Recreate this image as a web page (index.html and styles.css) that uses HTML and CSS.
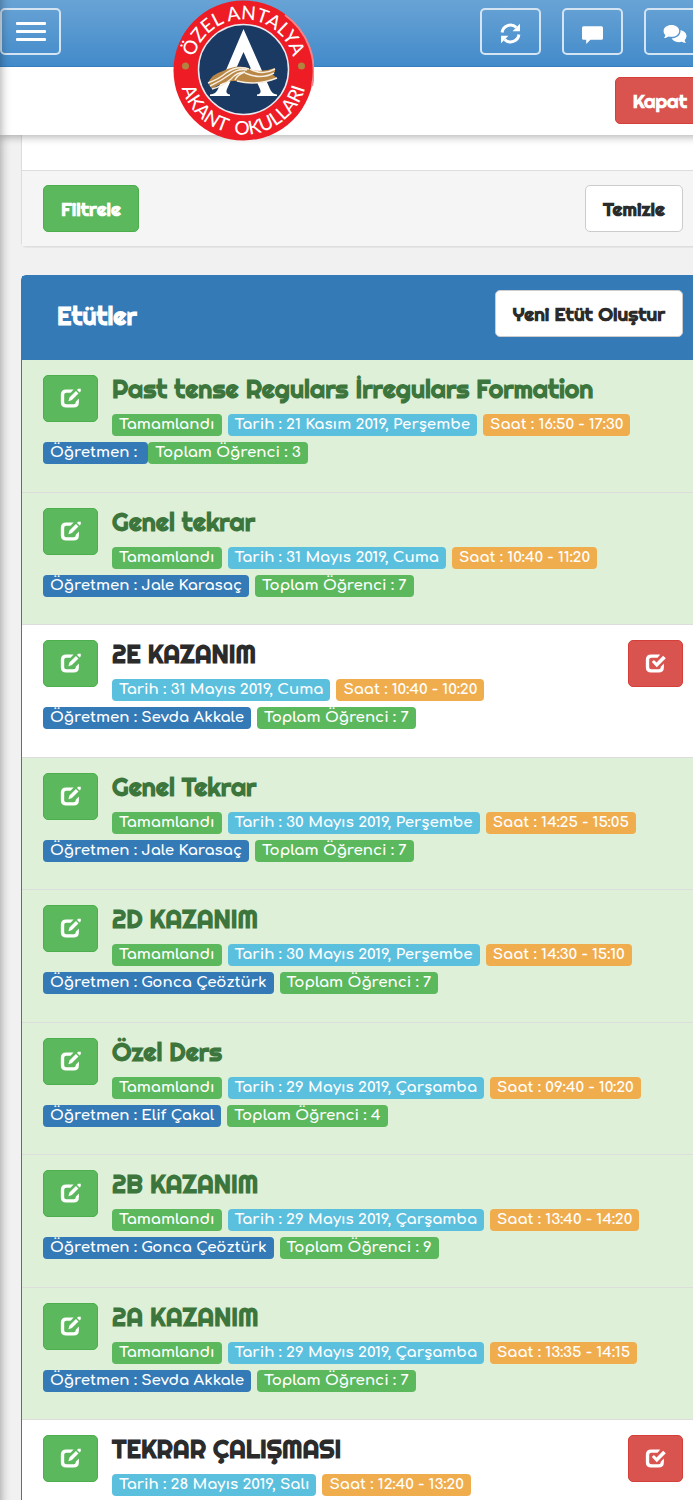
FILE: index.html
```html
<!DOCTYPE html>
<html lang="tr">
<head>
  <meta charset="UTF-8">
  <meta name="viewport" content="width=device-width, initial-scale=1.0">
  <title>Etütler</title>
  <link rel="stylesheet" href="styles.css">
</head>
<body>
  <!-- shared icons -->
  <svg width="0" height="0" class="sprite" aria-hidden="true">
    <symbol id="edit" viewBox="0 0 20 20">
      <path d="M13 1.500H6Q.8 1.500 .8 6.500V13.500Q.8 18.500 6 18.500H13Q18 18.500 18 13.500V10L15 13V13.500Q15 15.500 13 15.500H6Q4 15.500 4 13.500V6.500Q4 4.500 6 4.500H10Z" fill="currentColor"/>
      <path d="M8 12.500L9 9L15.200 2.800L17.600 5.200L11.400 11.400ZM16.200 1.900L17.200 .8H19.800V3.200L18.600 4.300Z" fill="currentColor"/>
    </symbol>
    <symbol id="check" viewBox="0 0 20 20">
      <path d="M14.500 1.500H6Q.8 1.500 .8 6.500V13.500Q.8 18.500 6 18.500H13Q18 18.500 18 13.500V10L15 13V13.500Q15 15.500 13 15.500H6Q4 15.500 4 13.500V6.500Q4 4.500 6 4.500H12Z" fill="currentColor"/>
      <path d="M6.500 8.500L8.500 6.700L11 9L17.300 2.500L19.800 5L11.200 13.500Z" fill="currentColor"/>
    </symbol>
  </svg>

  <div class="side-menu"></div>

  <div class="page">
    <header class="top">
      <div class="navbar">
        <button class="nav-btn" aria-label="Menü">
          <span class="bar"></span>
          <span class="bar"></span>
          <span class="bar"></span>
        </button>
        <div class="nav-right">
          <button class="nav-btn" aria-label="Yenile">
            <svg class="icon" viewBox="0 0 20 20">
              <path d="M2 9A8 8 0 0 1 15.500 4.200M18 11A8 8 0 0 1 4.500 15.800" fill="none" stroke="currentColor" stroke-width="2.800"/>
              <path d="M19 .8V7.800H12ZM1 19.200V12.200H8Z" fill="currentColor"/>
            </svg>
          </button>
          <button class="nav-btn" aria-label="Mesaj">
            <svg class="icon" viewBox="0 0 20 20">
              <path d="M1.500 3H18.500Q20 3 20 4.500V14.500Q20 16 18.500 16H8L4 20V16H1.500Q0 16 0 14.500V4.500Q0 3 1.500 3Z" fill="currentColor"/>
            </svg>
          </button>
          <button class="nav-btn" aria-label="Sohbet">
            <svg class="icon icon-wide" viewBox="0 0 24 20">
              <path d="M17.500 6.500C21 7.500 23.500 9.500 23.500 12.500C23.500 14 22.800 15.500 21.600 16.500C21.800 17.600 22.300 18.500 23 19.300C21.300 19.200 20 18.900 18.900 18.200C14 19.400 10 18 8.600 14.800C13.500 14.800 18 12 17.500 6.500Z" fill="currentColor"/>
              <path d="M8.500 1.500C12.800 1.500 16.200 4 16.200 7.400S12.800 13.300 8.500 13.300C7.500 13.300 6.500 13.200 5.600 12.900C4.400 13.800 2.800 14.400 1 14.500C1.800 13.500 2.300 12.500 2.400 11.400C1.200 10.400 .6 9 .6 7.400C.6 4 4.200 1.500 8.500 1.500Z" fill="currentColor"/>
            </svg>
          </button>
        </div>
      </div>
      <div class="subbar">
        <button class="btn btn-danger">Kapat</button>
      </div>

      <svg class="logo" viewBox="0 0 141 141" role="img" aria-label="Özel Antalya Akant Okulları">
        <defs>
          <path id="arcTop" d="M22.600 88A51 51 0 1 1 118.400 88"/>
          <path id="arcBottom" d="M10.400 48.600A64 64 0 1 0 130.600 48.600"/>
        </defs>
        <circle cx="70.500" cy="70.500" r="70" fill="#ee1c25"/>
        <path d="M112 15A69 69 0 0 1 139 86" fill="none" stroke="#f5858a" stroke-width="2"/>
        <circle cx="70.500" cy="69.500" r="45" fill="#1b3a63" stroke="#e9e9ee" stroke-width="1.500"/>
        <circle cx="12.500" cy="66" r="3.500" fill="#b18440"/>
        <circle cx="128.500" cy="66" r="3.500" fill="#b18440"/>
        <text class="logo-text"><textPath href="#arcTop" startOffset="50%" text-anchor="middle">ÖZEL ANTALYA</textPath></text>
        <text class="logo-text"><textPath href="#arcBottom" startOffset="50%" text-anchor="middle">AKANT&nbsp; OKULLARI</textPath></text>
        <!-- emblem -->
        <path d="M70.500 29L97 89Q99 94 104 94.500V96H84V94.500Q89 94 87 89L70.500 52L54 89Q52 94 57 94.500V96H37V94.500Q43 94 45 89Z" fill="#fff"/>
        <path d="M35 83Q39 74 50 71Q66 63 77 69Q88 73 102 68V72L99 74L104 78Q88 86 62 81Q52 80 39 89Z" fill="#b98746"/>
        <path d="M35 83Q46 79 53 73Q64 65 76 69M37 86Q48 81 56 75Q65 68 74 70M39 89Q50 86 58 79Q64 72 72 72M77 69Q90 76 102 69M72 73Q88 80 101 73M62 80Q64 75 72 72M64 81Q84 86 104 78" fill="none" stroke="#f6efe2" stroke-width="1.500"/>
      </svg>
    </header>

    <main>
      <section class="panel filter">
        <div class="filter-body"></div>
        <div class="filter-footer">
          <button class="btn btn-success">Filtrele</button>
          <button class="btn btn-default">Temizle</button>
        </div>
      </section>

      <section class="panel panel-primary">
        <div class="panel-heading">
          <h1>Etütler</h1>
          <button class="btn btn-default">Yeni Etüt Oluştur</button>
        </div>
        <ul class="list">
          <li class="item done">
            <div class="item-head">
              <button class="btn btn-success btn-icon" aria-label="Düzenle"><svg class="icon"><use href="#edit"/></svg></button>
              <div class="item-info">
                <h2>Past tense Regulars İrregulars Formation</h2>
                <div class="labels">
                  <span class="label green">Tamamlandı</span>
                  <span class="label cyan">Tarih : 21 Kasım 2019, Perşembe</span>
                  <span class="label orange">Saat : 16:50 - 17:30</span>
                </div>
              </div>
            </div>
            <div class="labels joined">
              <span class="label blue">Öğretmen :&nbsp;</span>
              <span class="label green">Toplam Öğrenci : 3</span>
            </div>
          </li>
          <li class="item done">
            <div class="item-head">
              <button class="btn btn-success btn-icon" aria-label="Düzenle"><svg class="icon"><use href="#edit"/></svg></button>
              <div class="item-info">
                <h2>Genel tekrar</h2>
                <div class="labels">
                  <span class="label green">Tamamlandı</span>
                  <span class="label cyan">Tarih : 31 Mayıs 2019, Cuma</span>
                  <span class="label orange">Saat : 10:40 - 11:20</span>
                </div>
              </div>
            </div>
            <div class="labels">
              <span class="label blue">Öğretmen : Jale Karasaç</span>
              <span class="label green">Toplam Öğrenci : 7</span>
            </div>
          </li>
          <li class="item">
            <div class="item-head">
              <button class="btn btn-success btn-icon" aria-label="Düzenle"><svg class="icon"><use href="#edit"/></svg></button>
              <div class="item-info">
                <h2>2E KAZANIM</h2>
                <div class="labels">
                  <span class="label cyan">Tarih : 31 Mayıs 2019, Cuma</span>
                  <span class="label orange">Saat : 10:40 - 10:20</span>
                </div>
              </div>
              <button class="btn btn-danger btn-icon" aria-label="Tamamla"><svg class="icon"><use href="#check"/></svg></button>
            </div>
            <div class="labels">
              <span class="label blue">Öğretmen : Sevda Akkale</span>
              <span class="label green">Toplam Öğrenci : 7</span>
            </div>
          </li>
          <li class="item done">
            <div class="item-head">
              <button class="btn btn-success btn-icon" aria-label="Düzenle"><svg class="icon"><use href="#edit"/></svg></button>
              <div class="item-info">
                <h2>Genel Tekrar</h2>
                <div class="labels">
                  <span class="label green">Tamamlandı</span>
                  <span class="label cyan">Tarih : 30 Mayıs 2019, Perşembe</span>
                  <span class="label orange">Saat : 14:25 - 15:05</span>
                </div>
              </div>
            </div>
            <div class="labels">
              <span class="label blue">Öğretmen : Jale Karasaç</span>
              <span class="label green">Toplam Öğrenci : 7</span>
            </div>
          </li>
          <li class="item done">
            <div class="item-head">
              <button class="btn btn-success btn-icon" aria-label="Düzenle"><svg class="icon"><use href="#edit"/></svg></button>
              <div class="item-info">
                <h2>2D KAZANIM</h2>
                <div class="labels">
                  <span class="label green">Tamamlandı</span>
                  <span class="label cyan">Tarih : 30 Mayıs 2019, Perşembe</span>
                  <span class="label orange">Saat : 14:30 - 15:10</span>
                </div>
              </div>
            </div>
            <div class="labels">
              <span class="label blue">Öğretmen : Gonca Çeöztürk</span>
              <span class="label green">Toplam Öğrenci : 7</span>
            </div>
          </li>
          <li class="item done">
            <div class="item-head">
              <button class="btn btn-success btn-icon" aria-label="Düzenle"><svg class="icon"><use href="#edit"/></svg></button>
              <div class="item-info">
                <h2>Özel Ders</h2>
                <div class="labels">
                  <span class="label green">Tamamlandı</span>
                  <span class="label cyan">Tarih : 29 Mayıs 2019, Çarşamba</span>
                  <span class="label orange">Saat : 09:40 - 10:20</span>
                </div>
              </div>
            </div>
            <div class="labels">
              <span class="label blue">Öğretmen : Elif Çakal</span>
              <span class="label green">Toplam Öğrenci : 4</span>
            </div>
          </li>
          <li class="item done">
            <div class="item-head">
              <button class="btn btn-success btn-icon" aria-label="Düzenle"><svg class="icon"><use href="#edit"/></svg></button>
              <div class="item-info">
                <h2>2B KAZANIM</h2>
                <div class="labels">
                  <span class="label green">Tamamlandı</span>
                  <span class="label cyan">Tarih : 29 Mayıs 2019, Çarşamba</span>
                  <span class="label orange">Saat : 13:40 - 14:20</span>
                </div>
              </div>
            </div>
            <div class="labels">
              <span class="label blue">Öğretmen : Gonca Çeöztürk</span>
              <span class="label green">Toplam Öğrenci : 9</span>
            </div>
          </li>
          <li class="item done">
            <div class="item-head">
              <button class="btn btn-success btn-icon" aria-label="Düzenle"><svg class="icon"><use href="#edit"/></svg></button>
              <div class="item-info">
                <h2>2A KAZANIM</h2>
                <div class="labels">
                  <span class="label green">Tamamlandı</span>
                  <span class="label cyan">Tarih : 29 Mayıs 2019, Çarşamba</span>
                  <span class="label orange">Saat : 13:35 - 14:15</span>
                </div>
              </div>
            </div>
            <div class="labels">
              <span class="label blue">Öğretmen : Sevda Akkale</span>
              <span class="label green">Toplam Öğrenci : 7</span>
            </div>
          </li>
          <li class="item">
            <div class="item-head">
              <button class="btn btn-success btn-icon" aria-label="Düzenle"><svg class="icon"><use href="#edit"/></svg></button>
              <div class="item-info">
                <h2>TEKRAR ÇALIŞMASI</h2>
                <div class="labels">
                  <span class="label cyan">Tarih : 28 Mayıs 2019, Salı</span>
                  <span class="label orange">Saat : 12:40 - 13:20</span>
                </div>
              </div>
              <button class="btn btn-danger btn-icon" aria-label="Tamamla"><svg class="icon"><use href="#check"/></svg></button>
            </div>
          </li>
        </ul>
      </section>
    </main>
  </div>
</body>
</html>
```
FILE: styles.css
```css
* {
  box-sizing: border-box;
}
body {
  margin: 0;
  background: #f1f1f1;
  color: #2b2b2b;
  font-family: Righteous, Lato, sans-serif;
  overflow-x: hidden;
}
button {
  font-family: inherit;
  cursor: pointer;
}
.sprite {
  position: absolute;
}
/* closed menu, only its shadow reaches the page */
.side-menu {
  position: fixed;
  z-index: 5;
  top: -20px;
  bottom: -20px;
  left: -240px;
  width: 240px;
  box-shadow: 0 0 10px rgba(0, 0, 0, 0.4);
}
/* the layout is a little wider than the screen */
.page {
  width: calc(100% + 12px);
}

/* header */
.top {
  position: relative;
  box-shadow: 0 2px 8px rgba(0, 0, 0, 0.3);
}
.navbar {
  display: flex;
  justify-content: space-between;
  height: 67px;
  padding-top: 8px;
  background: linear-gradient(#69a3d5, #428bca);
  border-bottom: 1px solid #3580c0;
}
.nav-right {
  display: flex;
  gap: 21px;
}
.nav-btn {
  display: flex;
  flex-direction: column;
  align-items: center;
  justify-content: center;
  gap: 5px;
  width: 61px;
  height: 47px;
  padding: 0;
  border: 2px solid #d5e4f2;
  border-radius: 5px;
  background: none;
  color: #fff;
}
.nav-right .nav-btn {
  padding-top: 4px;
}
.bar {
  width: 30px;
  height: 3px;
  border-radius: 1px;
  background: #fff;
}
.subbar {
  display: flex;
  justify-content: flex-end;
  align-items: flex-start;
  height: 68px;
  padding-top: 10px;
  background: #fff;
}
.logo {
  position: absolute;
  top: 0;
  left: 173px;
  width: 141px;
  height: 141px;
}
.logo-text {
  font-family: Lato, sans-serif;
  font-size: 19px;
  font-weight: 500;
  fill: #fff;
}
.icon {
  display: block;
  width: 21px;
  height: 21px;
}
.icon-wide {
  width: 24px;
}

/* buttons */
.btn {
  height: 47px;
  padding: 0 17px;
  border: 1px solid;
  border-radius: 5px;
  font-size: 19px;
  font-weight: 700;
  color: #fff;
}
.btn-success {
  background: #5cb85c;
  border-color: #4cae4c;
}
.btn-danger {
  background: #d9534f;
  border-color: #d43f3a;
}
.btn-default {
  background: #fff;
  border-color: #ccc;
  color: #2b2b2b;
}
.btn-icon {
  flex: none;
  width: 55px;
  padding: 0 16px;
}

/* panels */
main {
  padding-left: 21px;
}
.panel {
  border: 1px solid #ddd;
  background: #fff;
}
.filter {
  margin-bottom: 28px;
  border-top: 0;
  border-radius: 0 0 5px 5px;
  box-shadow: 0 1px 1px rgba(0, 0, 0, 0.05);
}
.filter-body {
  height: 35px;
}
.filter-footer {
  display: flex;
  justify-content: space-between;
  padding: 14px 21px;
  border-top: 1px solid #ddd;
  background: #f5f5f5;
}
.panel-primary {
  border-color: #337ab7;
  border-radius: 5px 5px 0 0;
}
.panel-heading {
  display: flex;
  justify-content: space-between;
  height: 84px;
  padding: 14px 21px 0 35px;
  background: #337ab7;
}
h1, h2 {
  margin: 0;
  font-size: 25px;
  font-weight: 700;
  line-height: 28px;
}
h1 {
  padding-top: 12px;
  color: #fff;
}

/* list */
.list {
  margin: 0;
  padding: 0;
  list-style: none;
}
.item {
  padding: 15px 21px 28px;
  border-bottom: 1px solid #ddd;
}
.item:nth-child(even) {
  padding-bottom: 27px;
}
.done {
  background: #dff0d8;
}
.done h2 {
  color: #3c763d;
}
.item-head {
  display: flex;
  align-items: flex-start;
  gap: 14px;
  margin-bottom: 6px;
}
.item-info {
  flex: 1;
}
.item-info .labels {
  margin-top: 11px;
}
.labels {
  display: flex;
  gap: 6px;
}
.joined {
  gap: 0;
}
.label {
  height: 22px;
  padding: 0 7px;
  border-radius: 4px;
  font-family: Comfortaa, Lato, sans-serif;
  font-size: 15px;
  font-weight: 700;
  line-height: 21px;
  white-space: nowrap;
  color: #fff;
}
.green {
  background: #5cb85c;
}
.cyan {
  background: #5bc0de;
}
.orange {
  background: #f0ad4e;
}
.blue {
  background: #337ab7;
}
```
